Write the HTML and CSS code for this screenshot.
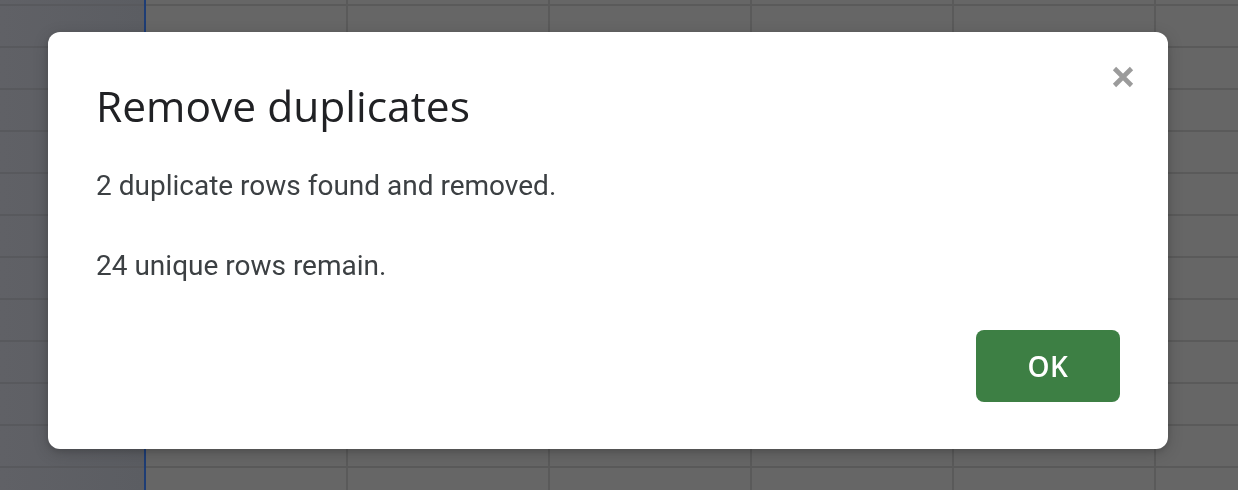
FILE: index.html
```html
<!DOCTYPE html>
<html lang="en">
<head>
<meta charset="utf-8">
<title>Remove duplicates</title>
<link rel="stylesheet" href="styles.css">
</head>
<body>
<div class="sheet">
  <div class="row-header-col"></div>
  <div class="cells"></div>
</div>
<div class="overlay">
  <div class="dialog" role="dialog" aria-labelledby="dlg-title">
    <button class="close" aria-label="Close">
      <svg viewBox="0 0 22 22" width="22" height="22" aria-hidden="true">
        <path d="M2.5 2.5 L19.5 19.5 M19.5 2.5 L2.5 19.5" stroke="#9b9b9b" stroke-width="4.6" stroke-linecap="butt" fill="none"/>
      </svg>
    </button>
    <h1 id="dlg-title" class="title">Remove duplicates</h1>
    <p class="msg">2 duplicate rows found and removed.</p>
    <p class="msg">24 unique rows remain.</p>
    <div class="actions">
      <button class="ok">OK</button>
    </div>
  </div>
</div>
</body>
</html>
```
FILE: styles.css
```css
html, body {
  margin: 0;
  padding: 0;
  height: 100%;
  overflow: hidden;
  background: #666666;
}

.sheet {
  display: flex;
  height: 490px;
  width: 1238px;
}

.row-header-col {
  width: 144px;
  flex: none;
  border-right: 2px solid #1e3d75;
  background:
    repeating-linear-gradient(to bottom, transparent 0 4px, #58595d 4px 6px, transparent 6px 42px),
    linear-gradient(to right, #606166, #5b5d62);
}

.cells {
  flex: 1;
  background:
    repeating-linear-gradient(to bottom, transparent 0 4px, #5a5a5a 4px 6px, transparent 6px 42px),
    repeating-linear-gradient(to right, transparent 0 200px, #5a5a5a 200px 202px),
    #666666;
}

.overlay {
  position: fixed;
  inset: 0;
  display: flex;
  align-items: flex-start;
  justify-content: flex-start;
  padding: 32px 0 0 48px;
}

.dialog {
  position: relative;
  box-sizing: border-box;
  width: 1120px;
  height: 417px;
  background: #ffffff;
  border-radius: 12px;
  box-shadow: 0 4px 16px rgba(0, 0, 0, 0.18), 0 2px 6px rgba(0, 0, 0, 0.12);
  padding: 48px 48px 47px 48px;
  display: flex;
  flex-direction: column;
}

.close {
  position: absolute;
  top: 34px;
  right: 34px;
  width: 22px;
  height: 22px;
  padding: 0;
  border: 0;
  background: transparent;
  display: flex;
  cursor: pointer;
}

.close svg {
  filter: blur(0.5px);
}

.title {
  margin: 0;
  font-family: "Open Sans", "Roboto", sans-serif;
  font-weight: 400;
  font-size: 42.5px;
  line-height: 52px;
  color: #202124;
  letter-spacing: 0;
}

.msg {
  margin: 0;
  font-family: "Roboto", "Liberation Sans", sans-serif;
  font-size: 28px;
  line-height: 40px;
  color: #3c4043;
  letter-spacing: 0;
}

.title + .msg {
  margin-top: 34px;
}

.msg + .msg {
  margin-top: 40px;
}

.actions {
  margin-top: auto;
  display: flex;
  justify-content: flex-end;
}

.ok {
  width: 144px;
  height: 72px;
  border: 0;
  border-radius: 8px;
  background: #3d7f44;
  color: #ffffff;
  font-family: "Open Sans", "Roboto", sans-serif;
  font-weight: 600;
  font-size: 28px;
  letter-spacing: 0.5px;
  padding: 0;
  cursor: pointer;
}
```
